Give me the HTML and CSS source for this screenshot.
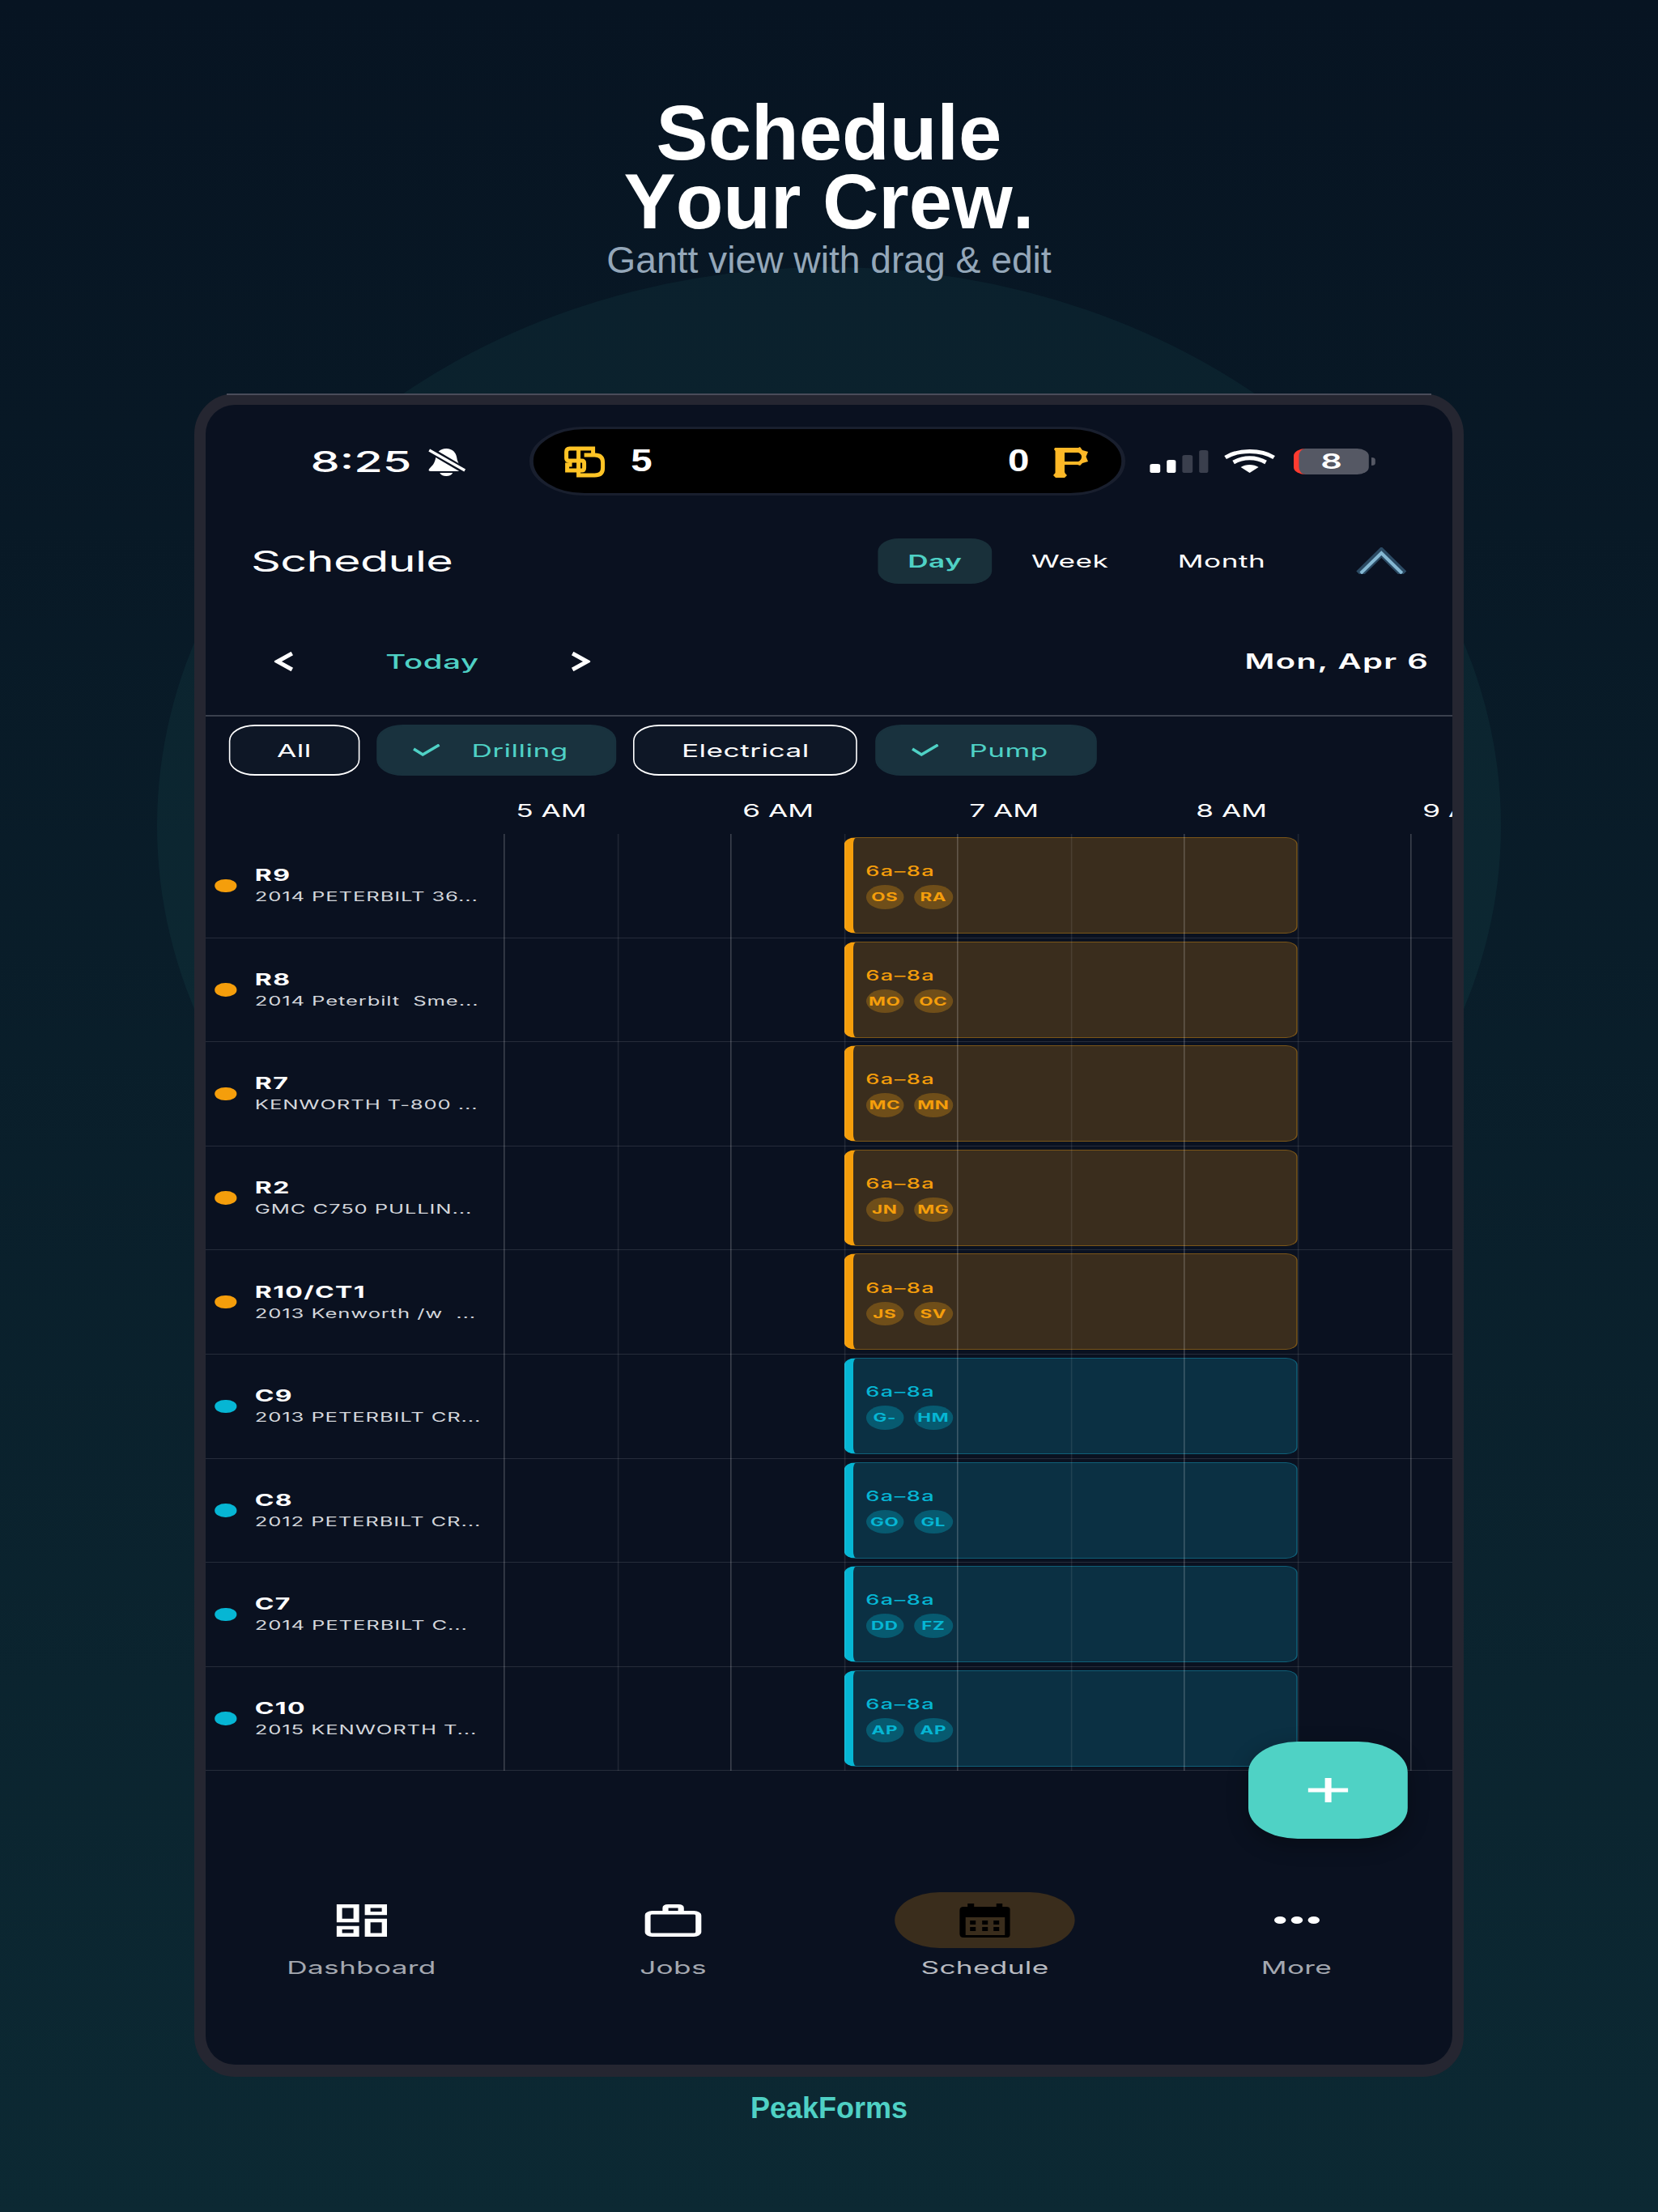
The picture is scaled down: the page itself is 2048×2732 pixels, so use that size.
FILE: index.html
```html
<!DOCTYPE html>
<html lang="en">
  <head>
    <meta charset="utf-8" />
    <title>Schedule Your Crew</title>
    <link rel="stylesheet" href="styles.css">
  </head>
  <body>
    <div class="halo"></div>
    <div class="hero">
      <h1>Schedule<br>Your Crew.</h1>
      <p>Gantt view with drag &amp; edit</p>
    </div>

    <div class="frame">
      <div class="screen">
        <div class="app">

          <div class="status">
            <span class="clock">8:25</span>
            <svg class="bell" viewBox="0 0 60 50" preserveAspectRatio="none">
              <path fill="#fff" d="M30 9C38 9 42 14 43 20C44 27 47 30 51 34Q52 37 49 37H11Q7 37 9 34C13 30 16 27 17 20C18 14 22 9 30 9Z"/>
              <path fill="#fff" d="M22 39H38Q36 43 30 43Q24 43 22 39Z"/>
              <path stroke="#0a1120" stroke-width="8" d="M8 10L54 37"/>
              <path stroke="#fff" stroke-width="3.5" d="M9 11L53 36"/>
            </svg>
            <div class="island">
              <svg class="logo-sd" viewBox="0 0 70 58" preserveAspectRatio="none">
                <g fill="none" stroke="#ffc425" stroke-width="5">
                  <path d="M45 19V13H16Q12 13 12 17V25Q12 28 16 28H31Q34 28 34 31V37Q34 40 31 40H13V33H19"/>
                  <path d="M27 13V46H47Q57 46 57 37V30Q57 21 47 21H34"/>
                </g>
              </svg>
              <span class="score">5</span>
              <span class="score score-right">0</span>
              <svg class="logo-p" viewBox="0 0 60 58" preserveAspectRatio="none">
                <path fill="#fdb827" fill-rule="evenodd" d="M9 12H38L40 11L43 15L50 17L47.500 23L50 29L43 31L40 34L37 33H21V42L22 44L24 46L21 49H10L7 46L9.500 43V16L8 14ZM21 18V29H38Q42 27 42 23Q42 20 38 18Z"/>
              </svg>
            </div>
            <div class="signal">
              <i class="on"></i><i class="on"></i><i></i><i></i>
            </div>
            <svg class="wifi" viewBox="0 0 64 29" preserveAspectRatio="none">
              <g fill="none" stroke="#fff" stroke-width="5">
                <path d="M2 10C18 0 46 0 62 10"/>
                <path d="M12 16C24 9 40 9 52 16"/>
              </g>
              <path fill="#fff" d="M21 22C27 18 37 18 43 22L32 29Z"/>
            </svg>
            <div class="battery">8</div>
            <div class="battery-tip"></div>
          </div>

          <div class="header">
            <span class="title">Schedule</span>
            <div class="segments">
              <span class="seg active">Day</span>
              <span class="seg">Week</span>
              <span class="seg">Month</span>
            </div>
            <svg class="collapse" viewBox="0 0 63 33" preserveAspectRatio="none">
              <path fill="none" stroke="#2b4a63" stroke-width="10" d="M4 33L31.500 6L59 33"/>
              <path fill="none" stroke="#85b8d3" stroke-width="4" d="M6 32L31.500 7L57 32"/>
            </svg>
          </div>

          <div class="datebar">
            <svg class="arrow" viewBox="0 0 24 24" preserveAspectRatio="none"><path d="M22 2L4 12L22 22"/></svg>
            <span class="today">Today</span>
            <svg class="arrow" viewBox="0 0 24 24" preserveAspectRatio="none"><path d="M2 2L20 12L2 22"/></svg>
            <span class="date">Mon, Apr 6</span>
          </div>

          <div class="chips">
            <span class="chip">All</span>
            <span class="chip on">
              <svg class="check" viewBox="0 0 33 15" preserveAspectRatio="none"><path d="M1 6L12 13L32 1"/></svg>Drilling
            </span>
            <span class="chip">Electrical</span>
            <span class="chip on">
              <svg class="check" viewBox="0 0 33 15" preserveAspectRatio="none"><path d="M1 6L12 13L32 1"/></svg>Pump
            </span>
          </div>

          <div class="hours">
            <span>5 AM</span><span>6 AM</span><span>7 AM</span><span>8 AM</span><span>9 AM</span>
          </div>

          <div class="rows">
            <div class="row drill">
              <div class="unit"><i class="dot"></i><div><b>R9</b><small>2014 PETERBILT 36...</small></div></div>
              <div class="lane"><div class="job"><em>6a–8a</em><div class="crew"><span>OS</span><span>RA</span></div></div></div>
            </div>
            <div class="row drill">
              <div class="unit"><i class="dot"></i><div><b>R8</b><small>2014 Peterbilt  Sme...</small></div></div>
              <div class="lane"><div class="job"><em>6a–8a</em><div class="crew"><span>MO</span><span>OC</span></div></div></div>
            </div>
            <div class="row drill">
              <div class="unit"><i class="dot"></i><div><b>R7</b><small>KENWORTH T-800 ...</small></div></div>
              <div class="lane"><div class="job"><em>6a–8a</em><div class="crew"><span>MC</span><span>MN</span></div></div></div>
            </div>
            <div class="row drill">
              <div class="unit"><i class="dot"></i><div><b>R2</b><small>GMC C750 PULLIN...</small></div></div>
              <div class="lane"><div class="job"><em>6a–8a</em><div class="crew"><span>JN</span><span>MG</span></div></div></div>
            </div>
            <div class="row drill">
              <div class="unit"><i class="dot"></i><div><b>R10/CT1</b><small>2013 Kenworth /w  ...</small></div></div>
              <div class="lane"><div class="job"><em>6a–8a</em><div class="crew"><span>JS</span><span>SV</span></div></div></div>
            </div>
            <div class="row pump">
              <div class="unit"><i class="dot"></i><div><b>C9</b><small>2013 PETERBILT CR...</small></div></div>
              <div class="lane"><div class="job"><em>6a–8a</em><div class="crew"><span>G-</span><span>HM</span></div></div></div>
            </div>
            <div class="row pump">
              <div class="unit"><i class="dot"></i><div><b>C8</b><small>2012 PETERBILT CR...</small></div></div>
              <div class="lane"><div class="job"><em>6a–8a</em><div class="crew"><span>GO</span><span>GL</span></div></div></div>
            </div>
            <div class="row pump">
              <div class="unit"><i class="dot"></i><div><b>C7</b><small>2014 PETERBILT C...</small></div></div>
              <div class="lane"><div class="job"><em>6a–8a</em><div class="crew"><span>DD</span><span>FZ</span></div></div></div>
            </div>
            <div class="row pump">
              <div class="unit"><i class="dot"></i><div><b>C10</b><small>2015 KENWORTH T...</small></div></div>
              <div class="lane"><div class="job"><em>6a–8a</em><div class="crew"><span>AP</span><span>AP</span></div></div></div>
            </div>
            <div class="gridlines">
              <i></i><i></i><i></i><i></i><i></i><i></i><i></i><i></i><i></i>
            </div>
          </div>

          <div class="fab">
            <svg viewBox="0 0 50 30" preserveAspectRatio="none">
              <rect x="21" y="0" width="8" height="30"/>
              <rect x="0" y="12.500" width="50" height="5"/>
            </svg>
          </div>

          <div class="nav">
            <div class="tab">
              <div class="tab-icon">
                <svg class="ic-dash" viewBox="3 3 18 18" preserveAspectRatio="none">
                  <path fill="#fff" d="M19 5v2h-4V5h4M9 5v6H5V5h4m10 8v6h-4v-6h4M9 17v2H5v-2h4M21 3h-8v6h8V3zM11 3H3v10h8V3zm10 8h-8v10h8V11zm-10 4H3v6h8v-6z"/>
                </svg>
              </div>
              <span>Dashboard</span>
            </div>
            <div class="tab">
              <div class="tab-icon">
                <svg class="ic-jobs" viewBox="0 0 43.750 40">
                  <rect x="2.250" y="10.250" width="39.250" height="27.500" rx="3.500" fill="none" stroke="#fff" stroke-width="4.500"/>
                  <path d="M16 10V4.500Q16 2.250 18 2.250H26Q28 2.250 28 4.500V10" fill="none" stroke="#fff" stroke-width="4.500"/>
                </svg>
              </div>
              <span>Jobs</span>
            </div>
            <div class="tab current">
              <div class="tab-icon">
                <svg class="ic-cal" viewBox="0 0 63 42" preserveAspectRatio="none">
                  <path d="M10 0H18V4H45.500V0H53V4H58Q63 4 63 9V37Q63 42 58 42H5Q0 42 0 37V9Q0 4 5 4H10Z"/>
                  <rect x="7.500" y="17" width="48.500" height="22" fill="#3a2d1c"/>
                  <rect x="13" y="21" width="7" height="5"/><rect x="28" y="21" width="7" height="5"/><rect x="42" y="21" width="7" height="5"/>
                  <rect x="13" y="29" width="7" height="5"/><rect x="28" y="29" width="7" height="5"/><rect x="42" y="29" width="7" height="5"/>
                </svg>
              </div>
              <span>Schedule</span>
            </div>
            <div class="tab">
              <div class="tab-icon">
                <div class="dots"><i></i><i></i><i></i></div>
              </div>
              <span>More</span>
            </div>
          </div>

        </div>
      </div>
    </div>

    <div class="brand">PeakForms</div>
  </body>
</html>
```

FILE: styles.css
```css
* { box-sizing: border-box; }

body {
    margin: 0;
    width: 2048px;
    height: 2732px;
    overflow: hidden;
    position: relative;
    background: linear-gradient(180deg, #071422 0%, #0c2933 100%);
    font-family: "Liberation Sans", Arial, sans-serif;
    font-kerning: none;
}

.halo {
    position: absolute;
    left: 194px; top: 330px;
    width: 1660px; height: 1380px;
    border-radius: 50%;
    background: rgba(78, 210, 195, 0.055);
}

.hero { position: relative; padding-top: 121px; text-align: center; }
.hero h1 {
    margin: 0;
    font-size: 96px; line-height: 85px; font-weight: 700;
    color: #fff;
}
.hero p {
    margin: 4px 0 0;
    font-size: 46.2px; line-height: 52px;
    color: #94a7b9;
}

.frame {
    position: relative;
    width: 1568px; height: 2079px;
    margin: 139px auto 0;
    padding: 14px;
    border-radius: 50px;
    background: #252631;
}
.frame::before {
    content: "";
    position: absolute;
    top: 0; left: 40px; right: 40px;
    height: 2px;
    background: #4a4c5a;
}

.brand {
    position: relative;
    margin-top: 18px;
    text-align: center;
    font-size: 36px; line-height: 42px; font-weight: 700;
    color: #4fd1c5;
}

/* the app is a phone screen stretched to fit the tablet frame: everything
   inside .app is laid out 962.5 wide and blown up 1.6x horizontally */
.screen {
    width: 1540px; height: 2050px;
    border-radius: 36px;
    overflow: hidden;
    background: #0a1120;
}
.app {
    position: relative;
    width: 962.5px; height: 2050px;
    padding-top: 27px;
    transform: scaleX(1.6);
    transform-origin: 0 0;
    font-family: Inter, "Noto Sans", sans-serif;
    font-kerning: auto;
    color: #fff;
}

/* status bar */
.status {
    display: flex;
    align-items: center;
    height: 85px;
    padding-left: 81px;
}
.clock { font-size: 36px; font-weight: 500; width: 90px; }
.bell { width: 37.5px; height: 50px; flex: none; margin-right: 45.6px; margin-left: -4px; }

.island {
    display: flex;
    align-items: center;
    width: 460px; height: 85px;
    border: 3px solid #191f2e;
    border-radius: 43px;
    background: #000;
    flex: none;
}
.logo-sd { width: 43.75px; height: 58px; margin-left: 18px; flex: none; }
.logo-p { width: 37.5px; height: 58px; margin-left: 11px; margin-right: 20px; flex: none; }
.score {
    margin-left: 11px;
    font-family: "Liberation Sans", sans-serif;
    font-size: 38px; font-weight: 700;
    transform: scaleX(0.78);
}
.score-right { margin-left: auto; }

.signal {
    display: flex;
    align-items: flex-end;
    gap: 5px;
    height: 28px;
    margin-left: 19px;
}
.signal i { display: block; width: 7.5px; border-radius: 2px; background: #3a3f4d; }
.signal i:nth-child(1) { height: 11px; }
.signal i:nth-child(2) { height: 16px; }
.signal i:nth-child(3) { height: 22px; }
.signal i:nth-child(4) { height: 28px; }
.signal i.on { background: #fff; }

.wifi { width: 40px; height: 29px; margin-left: 12px; flex: none; }

.battery {
    width: 58px; height: 32px;
    margin-left: 14px;
    padding-right: 4px;
    border-left: 4px solid #ff3b30;
    border-radius: 9px;
    background: #555864;
    text-align: center;
    font-size: 26px; line-height: 32px; font-weight: 600;
}
.battery-tip {
    width: 3px; height: 10px;
    margin-left: 2px;
    border-radius: 0 5px 5px 0;
    background: #555864;
}

/* title + day/week/month */
.header {
    display: flex;
    align-items: center;
    height: 56px;
    margin-top: 53px;
    padding-left: 35px;
}
.title { font-size: 36px; letter-spacing: -0.4px; width: 484px; }
.segments { display: flex; gap: 7.5px; width: 369px; }
.seg {
    padding: 0 23px;
    height: 56px;
    border-radius: 16px;
    font-size: 22px; line-height: 56px; letter-spacing: 0.3px;
}
.seg.active { background: #19303a; color: #4fd1c5; font-weight: 600; }
.collapse { width: 39.4px; height: 33px; margin-top: -2px; }

/* date bar */
.datebar {
    display: flex;
    align-items: center;
    height: 64px;
    margin-top: 64px;
    margin-bottom: 34px;
    padding-left: 53px;
    padding-right: 18px;
}
.arrow { width: 15px; height: 24px; fill: none; stroke: #fff; stroke-width: 5; flex: none; }
.today {
    width: 214px;
    text-align: center;
    color: #4fd1c5;
    font-size: 24px; font-weight: 500; letter-spacing: 0.4px;
}
.date {
    margin-left: auto;
    font-size: 25px; font-weight: 600; letter-spacing: 0.9px;
}

/* filter chips */
.chips {
    display: flex;
    gap: 13.5px;
    padding: 10px 0 0 18px;
    border-top: 2px solid #3a404d;
}
.chip {
    display: flex;
    align-items: center;
    height: 63px;
    padding: 0 36px;
    border: solid #fff;
    border-width: 2.4px 1.8px;
    border-radius: 20px;
    background: #0e1726;
    font-size: 22px; letter-spacing: 0.3px;
}
.chip.on {
    padding: 0 36px 0 27px;
    border-color: #19323e;
    background: #19323e;
    color: #4fd1c5;
}
.check {
    width: 21px; height: 15px;
    margin-right: 24px;
    fill: none; stroke: #4fd1c5; stroke-width: 3.5;
}

/* hour labels */
.hours {
    display: flex;
    height: 72px;
    padding: 29px 0 0 239.5px;
    white-space: nowrap;
}
.hours span {
    flex: none;
    width: 175px;
    font-size: 22px; line-height: 28px;
}

/* gantt rows */
.rows { position: relative; }
.row {
    display: grid;
    grid-template-columns: 230px 1fr;
    height: 128.6px;
    border-bottom: 1.5px solid #262c3a;
}
.unit { display: flex; align-items: center; padding-left: 7px; }
.dot {
    flex: none;
    width: 16.5px; height: 16.5px;
    margin-right: 14.5px;
    border-radius: 50%;
}
.unit b { display: block; font-size: 20px; line-height: 23px; font-weight: 700; letter-spacing: 0.85px; }
.unit small {
    display: block;
    margin-top: 4px;
    font-size: 16px; line-height: 20px;
    letter-spacing: 0.55px;
    white-space: pre;
    color: #d4d7dc;
}

.job {
    display: flex;
    flex-direction: column;
    justify-content: center;
    width: 350px; height: 119px;
    margin: 4px 0 0 262.5px;
    padding: 2px 0 0 10px;
    border: 1px solid;
    border-left-width: 7.5px;
    border-radius: 9px;
}
.job em { font-style: normal; font-size: 17px; line-height: 20px; font-weight: 500; letter-spacing: 0.9px; }
.crew { display: flex; gap: 8px; margin-top: 7px; }
.crew span {
    width: 29.5px; height: 29.5px;
    border-radius: 50%;
    text-align: center;
    font-size: 14px; line-height: 29.5px; font-weight: 700; letter-spacing: 0.4px;
}

.drill .dot { background: #f59e0b; }
.drill .job { background: #3a2d1d; border-color: #7a5518; border-left-color: #f59e0b; color: #f59e0b; }
.drill .crew span { background: #6f4e19; }
.pump .dot { background: #06b6d4; }
.pump .job { background: #0b3043; border-color: #0f5f78; border-left-color: #06b6d4; color: #06b6d4; }
.pump .crew span { background: #075a70; }

.gridlines {
    position: absolute;
    top: 0; bottom: 0; left: 230px; right: 0;
    display: flex;
    overflow: hidden;
    pointer-events: none;
}
.gridlines i {
    flex: none;
    width: 87.5px;
    border-left: 1px solid rgba(255, 255, 255, 0.09);
}
.gridlines i:nth-child(odd) { border-left-color: rgba(255, 255, 255, 0.2); }

.fab {
    position: absolute;
    left: 805px; top: 1651px;
    display: flex;
    align-items: center;
    justify-content: center;
    width: 122.5px; height: 120px;
    border-radius: 38px;
    background: #4fd2c5;
    box-shadow: 0 8px 20px rgba(0, 0, 0, 0.3);
}
.fab svg { width: 31.25px; height: 30px; fill: #fff; }

/* bottom nav */
.nav { display: flex; padding-top: 150px; }
.tab {
    flex: 1;
    display: flex;
    flex-direction: column;
    align-items: center;
    font-size: 22px; line-height: 26px; letter-spacing: 0.2px;
    color: #a4a8b0;
}
.tab-icon {
    display: flex;
    align-items: center;
    justify-content: center;
    width: 139.5px; height: 69px;
    margin-bottom: 11px;
    border-radius: 35px;
}
.tab.current { color: #b8bbc1; }
.tab.current .tab-icon { background: #3a2d1c; }
.ic-dash { width: 39.4px; height: 40px; }
.ic-jobs { width: 43.75px; height: 40px; }
.ic-cal { width: 39.4px; height: 42px; }
.dots { display: flex; gap: 4px; }
.dots i { width: 9px; height: 9px; border-radius: 50%; background: #fff; }
```
